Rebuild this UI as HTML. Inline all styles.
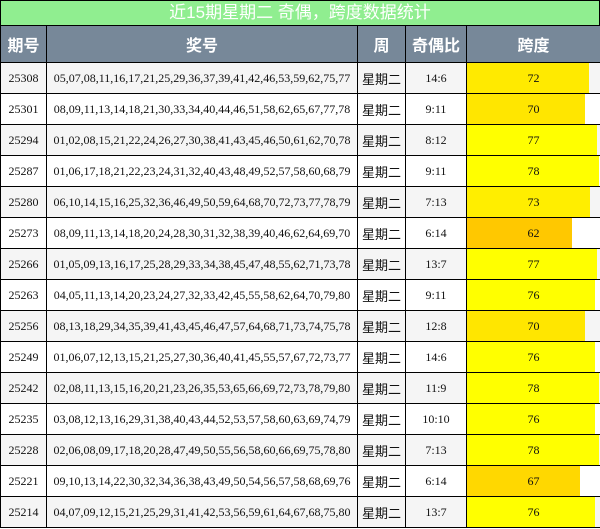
<!DOCTYPE html><html><head><meta charset="utf-8"><style>
body{margin:0;width:600px;height:529px;overflow:hidden;background:#fff;font-family:"Liberation Serif","Noto Sans CJK SC",serif}
.t{height:24px;background:#90ee90;border:1px solid #000;border-bottom:none;color:#fff;font:17px/24px "Liberation Sans","Noto Sans CJK SC",sans-serif;text-align:center;box-sizing:content-box;width:598px}
table{border-collapse:collapse;width:600px;table-layout:fixed}
td,th{border:1px solid #000;padding:0;text-align:center;font-size:12px;color:#111;white-space:nowrap;overflow:hidden}
th{background:#778899;color:#fff;height:36px;font:bold 16px "Liberation Sans","Noto Sans CJK SC",sans-serif}
tr.r td{height:30px}
tr.r:nth-child(even) td{background:#f5f5f5}
tr.r:nth-child(odd) td{background:#fff}
td.w{font-family:"Liberation Sans","Noto Sans CJK SC",sans-serif;font-size:13px}
td.k{position:relative}
td.k div{position:absolute;left:0;top:0;bottom:0}
td.k span{position:relative}
</style></head><body>
<div class="t">近15期星期二 奇偶，跨度数据统计</div>
<table>
<colgroup><col style="width:46px"><col style="width:311px"><col style="width:48px"><col style="width:61px"><col style="width:134px"></colgroup>
<tr><th>期号</th><th>奖号</th><th>周</th><th>奇偶比</th><th>跨度</th></tr>
<tr class="r"><td>25308</td><td>05,07,08,11,16,17,21,25,29,36,37,39,41,42,46,53,59,62,75,77</td><td class="w">星期二</td><td>14:6</td><td class="k"><div style="width:122px;background:#ffea00"></div><span>72</span></td></tr>
<tr class="r"><td>25301</td><td>08,09,11,13,14,18,21,30,33,34,40,44,46,51,58,62,65,67,77,78</td><td class="w">星期二</td><td>9:11</td><td class="k"><div style="width:118px;background:#ffe600"></div><span>70</span></td></tr>
<tr class="r"><td>25294</td><td>01,02,08,15,21,22,24,26,27,30,38,41,43,45,46,50,61,62,70,78</td><td class="w">星期二</td><td>8:12</td><td class="k"><div style="width:130px;background:#ffff00"></div><span>77</span></td></tr>
<tr class="r"><td>25287</td><td>01,06,17,18,21,22,23,24,31,32,40,43,48,49,52,57,58,60,68,79</td><td class="w">星期二</td><td>9:11</td><td class="k"><div style="width:132px;background:#ffff00"></div><span>78</span></td></tr>
<tr class="r"><td>25280</td><td>06,10,14,15,16,25,32,36,46,49,50,59,64,68,70,72,73,77,78,79</td><td class="w">星期二</td><td>7:13</td><td class="k"><div style="width:123px;background:#ffee00"></div><span>73</span></td></tr>
<tr class="r"><td>25273</td><td>08,09,11,13,14,18,20,24,28,30,31,32,38,39,40,46,62,64,69,70</td><td class="w">星期二</td><td>6:14</td><td class="k"><div style="width:105px;background:#ffc800"></div><span>62</span></td></tr>
<tr class="r"><td>25266</td><td>01,05,09,13,16,17,25,28,29,33,34,38,45,47,48,55,62,71,73,78</td><td class="w">星期二</td><td>13:7</td><td class="k"><div style="width:130px;background:#ffff00"></div><span>77</span></td></tr>
<tr class="r"><td>25263</td><td>04,05,11,13,14,20,23,24,27,32,33,42,45,55,58,62,64,70,79,80</td><td class="w">星期二</td><td>9:11</td><td class="k"><div style="width:128px;background:#ffff00"></div><span>76</span></td></tr>
<tr class="r"><td>25256</td><td>08,13,18,29,34,35,39,41,43,45,46,47,57,64,68,71,73,74,75,78</td><td class="w">星期二</td><td>12:8</td><td class="k"><div style="width:118px;background:#ffe600"></div><span>70</span></td></tr>
<tr class="r"><td>25249</td><td>01,06,07,12,13,15,21,25,27,30,36,40,41,45,55,57,67,72,73,77</td><td class="w">星期二</td><td>14:6</td><td class="k"><div style="width:128px;background:#ffff00"></div><span>76</span></td></tr>
<tr class="r"><td>25242</td><td>02,08,11,13,15,16,20,21,23,26,35,53,65,66,69,72,73,78,79,80</td><td class="w">星期二</td><td>11:9</td><td class="k"><div style="width:132px;background:#ffff00"></div><span>78</span></td></tr>
<tr class="r"><td>25235</td><td>03,08,12,13,16,29,31,38,40,43,44,52,53,57,58,60,63,69,74,79</td><td class="w">星期二</td><td>10:10</td><td class="k"><div style="width:128px;background:#ffff00"></div><span>76</span></td></tr>
<tr class="r"><td>25228</td><td>02,06,08,09,17,18,20,28,47,49,50,55,56,58,60,66,69,75,78,80</td><td class="w">星期二</td><td>7:13</td><td class="k"><div style="width:132px;background:#ffff00"></div><span>78</span></td></tr>
<tr class="r"><td>25221</td><td>09,10,13,14,22,30,32,34,36,38,43,49,50,54,56,57,58,68,69,76</td><td class="w">星期二</td><td>6:14</td><td class="k"><div style="width:113px;background:#ffd800"></div><span>67</span></td></tr>
<tr class="r"><td>25214</td><td>04,07,09,12,15,21,25,29,31,41,42,53,56,59,61,64,67,68,75,80</td><td class="w">星期二</td><td>13:7</td><td class="k"><div style="width:128px;background:#ffff00"></div><span>76</span></td></tr>
</table>
</body></html>
